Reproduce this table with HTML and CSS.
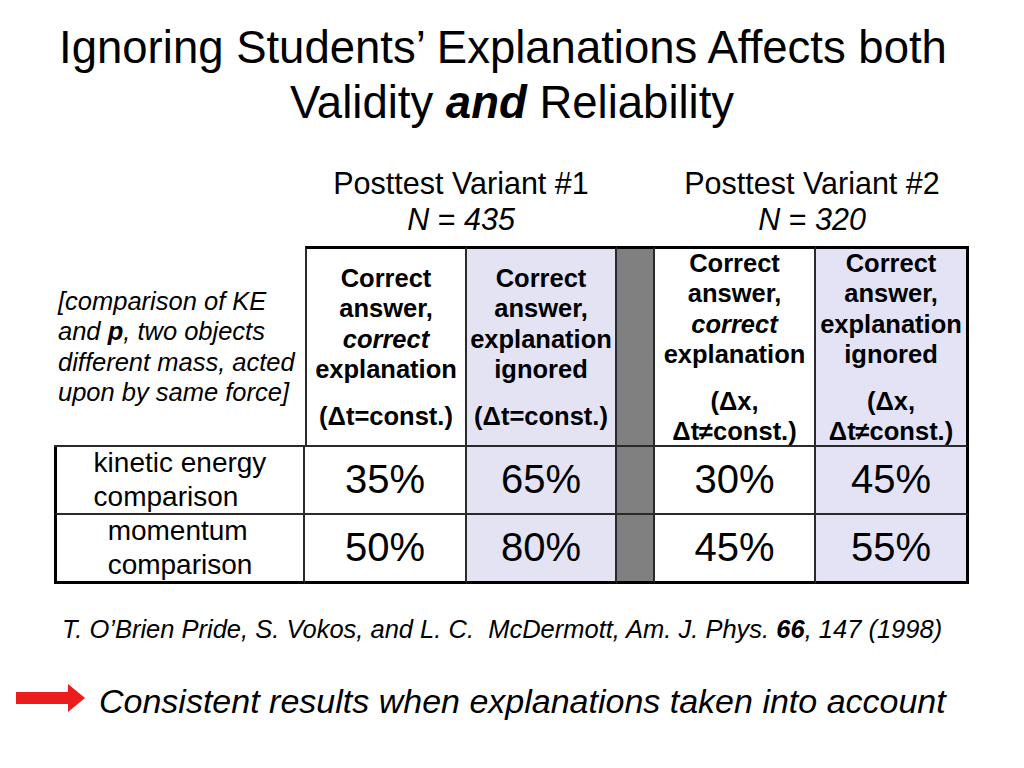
FILE: index.html
```html
<!DOCTYPE html>
<html>
<head>
<meta charset="utf-8">
<link rel="stylesheet" href="styles.css">
</head>
<body>
<div class="slide">
  <h1 class="title"><span class="l1">Ignoring Students’ Explanations Affects both</span><br>Validity <em>and</em> Reliability</h1>

  <div class="variants">
    <div class="variant v1">Posttest Variant #1<br><i>N</i> = <i>435</i></div>
    <div class="variant v2">Posttest Variant #2<br><i>N</i> = <i>320</i></div>
  </div>

  <div class="grid">
    <div class="note"><i>[comparison of KE<br>and <b>p</b>, two objects<br>different mass, acted<br>upon by same force]</i></div>
    <div class="cell head top first">
      <div>Correct<br>answer,<br><i>correct</i><br>explanation</div>
      <div class="cond">(Δt=const.)</div>
    </div>
    <div class="cell head top blue">
      <div>Correct<br>answer,<br>explanation<br>ignored</div>
      <div class="cond">(Δt=const.)</div>
    </div>
    <div class="cell gray top"></div>
    <div class="cell head top">
      <div>Correct<br>answer,<br><i>correct</i><br>explanation</div>
      <div class="cond">(Δx,<br>Δt≠const.)</div>
    </div>
    <div class="cell head top blue last">
      <div>Correct<br>answer,<br>explanation<br>ignored</div>
      <div class="cond">(Δx,<br>Δt≠const.)</div>
    </div>

    <div class="cell label left"><span>kinetic energy<br>comparison</span></div>
    <div class="cell num">35%</div>
    <div class="cell num blue">65%</div>
    <div class="cell gray"></div>
    <div class="cell num">30%</div>
    <div class="cell num blue last">45%</div>

    <div class="cell label left bottom"><span>momentum<br>comparison</span></div>
    <div class="cell num bottom">50%</div>
    <div class="cell num blue bottom">80%</div>
    <div class="cell gray bottom"></div>
    <div class="cell num bottom">45%</div>
    <div class="cell num blue last bottom">55%</div>
  </div>

  <p class="cite">T. O’Brien Pride, S. Vokos, and L. C.&nbsp; McDermott, Am. J. Phys. <b>66</b>, 147 (1998)</p>

  <div class="conclusion">
    <svg class="arrow" width="70" height="28" viewBox="0 0 70 28"><polygon points="0,8 52,8 52,0 69,14 52,28 52,20 0,20" fill="#ec1c1c"/></svg>
    <span>Consistent results when explanations taken into account</span>
  </div>
</div>
</body>
</html>
```

FILE: styles.css
```css
html, body {
  margin: 0;
  padding: 0;
  background: #fff;
}

.slide {
  width: 1024px;
  height: 768px;
  overflow: hidden;
  font-family: "Liberation Sans", Arial, sans-serif;
  color: #000;
}

.title {
  margin: 0;
  padding-top: 20px;
  font-size: 45.5px;
  font-weight: normal;
  line-height: 55px;
  text-align: center;
  white-space: nowrap;
}

.title .l1 {
  margin-right: 18px;
}

.title em {
  font-weight: bold;
  font-style: italic;
}

.variants {
  display: grid;
  grid-template-columns: 312px 38px 314px;
  margin-left: 305px;
  margin-top: 35px;
  font-size: 30.5px;
  line-height: 36px;
  text-align: center;
  white-space: nowrap;
}

.v2 {
  grid-column: 3;
}

.grid {
  display: grid;
  grid-template-columns: 251px 162px 150px 38px 161px 153px;
  grid-template-rows: 201px 68px 69px;
  margin-left: 54px;
  margin-top: 9px;
}

.cell {
  box-sizing: border-box;
  border-right: 2px solid #2a2a2a;
  border-bottom: 2px solid #2a2a2a;
  display: flex;
  flex-direction: column;
  align-items: center;
  justify-content: center;
  text-align: center;
  white-space: nowrap;
}

.note {
  box-sizing: border-box;
  display: flex;
  align-items: center;
  padding-left: 4px;
  padding-top: 2px;
  border-bottom: 2px solid #2a2a2a;
  font-size: 25.5px;
  line-height: 30.5px;
  white-space: nowrap;
}

.top {
  border-top: 3px solid #000;
}

.first {
  border-left: 2px solid #2a2a2a;
}

.left {
  border-left: 3px solid #000;
}

.last {
  border-right: 3px solid #000;
}

.bottom {
  border-bottom: 3px solid #000;
}

.blue {
  background-color: #e8e8f9;
  background-image: radial-gradient(circle, #dcdcee 0.6px, transparent 0.8px);
  background-size: 2px 2px;
}

.gray {
  background: #808080;
}

.head {
  font-weight: bold;
  font-size: 25.5px;
  line-height: 30.5px;
}

.head i {
  font-style: italic;
}

.cond {
  margin-top: 16px;
}

.label {
  font-size: 28px;
  line-height: 33.5px;
  padding-bottom: 1px;
}

.label span {
  display: inline-block;
  text-align: left;
}

.num {
  font-size: 40px;
  padding-bottom: 2px;
}

.cite {
  margin: 30px 0 0 62px;
  font-size: 25.5px;
  line-height: 30px;
  font-style: italic;
  white-space: nowrap;
}

.conclusion {
  display: flex;
  align-items: center;
  margin-top: 37px;
  height: 40px;
}

.arrow {
  margin-left: 16px;
  margin-right: 13px;
  flex: none;
  position: relative;
  top: -3px;
}

.conclusion span {
  font-size: 34px;
  font-style: italic;
  white-space: nowrap;
}
```
